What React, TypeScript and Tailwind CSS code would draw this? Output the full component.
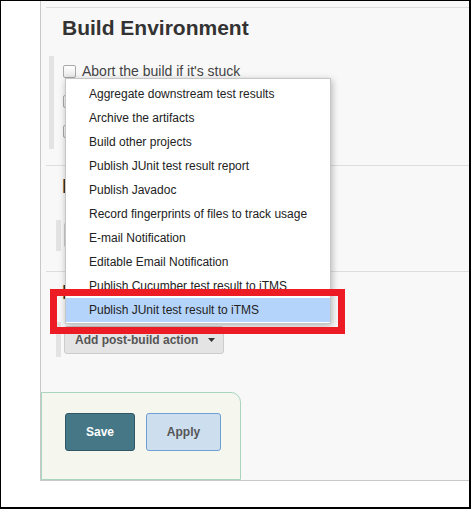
const menuItems = [
  'Aggregate downstream test results',
  'Archive the artifacts',
  'Build other projects',
  'Publish JUnit test result report',
  'Publish Javadoc',
  'Record fingerprints of files to track usage',
  'E-mail Notification',
  'Editable Email Notification',
  'Publish Cucumber test result to iTMS',
  'Publish JUnit test result to iTMS',
]

const envOptions = [
  "Abort the build if it's stuck",
  'Delete workspace before build starts',
  'Add timestamps to the Console Output',
]

function Checkbox() {
  return (
    <div className="w-[13px] h-[13px] shrink-0 rounded-[2px] border border-[#a9a9a9] bg-gradient-to-b from-white to-[#e9e9e9]" />
  )
}

function Caret() {
  return (
    <svg width="7" height="4" viewBox="0 0 7 4" className="ml-[10px]">
      <path d="M0 0 L7 0 L3.5 4 Z" fill="#333" />
    </svg>
  )
}

export default function App() {
  return (
    <div
      className="relative w-[471px] h-[509px] overflow-hidden bg-white border-black border-l border-t border-r-2 border-b-2 text-[#333]"
      style={{ fontFamily: '"Liberation Sans", Arial, sans-serif' }}
    >
      <div className="flex">
        {/* left gutter */}
        <div className="w-[39px] shrink-0" />

        {/* config panel */}
        <div className="flex-1 bg-[#f8f8f8] border-l border-b border-[#c8c8c8]">
          {/* Build Environment */}
          <div className="mt-[6px] ml-[5px] border-t border-[#dddddd] pb-[16px]">
            <h2 className="mt-[8px] pl-[16px] h-[24px] leading-[24px] text-[21px] font-bold text-[#333]">
              Build Environment
            </h2>
            <div className="mt-[16px] ml-[3px] h-[93px] border-l-[5px] border-[#e3e3e3] pl-[9px] flex flex-col">
              {envOptions.map((opt) => (
                <div key={opt} className="h-[30px] flex items-center gap-[6px]">
                  <Checkbox />
                  <span className="text-[14px] text-[#444]">{opt}</span>
                </div>
              ))}
            </div>
          </div>

          {/* Build */}
          <div className="ml-[5px] border-t border-[#dddddd] pb-[20px]">
            <h2 className="mt-[8px] pl-[16px] h-[24px] leading-[24px] text-[21px] font-bold text-[#333]">
              Build
            </h2>
            <div className="mt-[22px] ml-[10px] border-l-[5px] border-[#e3e3e3] pl-[3px] pt-[2px] pb-[3px]">
              <button className="h-[26px] px-[10px] flex items-center rounded-[3px] border border-[#cccccc] bg-[#e4e4e4] text-[12px] font-bold text-[#555]">
                Add build step
                <Caret />
              </button>
            </div>
          </div>

          {/* Post-build Actions */}
          <div className="ml-[5px] border-t border-[#dddddd]">
            <h2 className="mt-[8px] pl-[16px] h-[24px] leading-[24px] text-[21px] font-bold text-[#333]">
              Post-build Actions
            </h2>
            <div className="mt-[18px] ml-[10px] border-l-[5px] border-[#e3e3e3] pl-[3px] pt-[4px] pb-[3px]">
              <button className="w-[160px] h-[28px] pl-[10px] flex items-center rounded-[3px] border border-[#cccccc] bg-[#e4e4e4] text-[12px] font-bold text-[#555]">
                Add post-build action
                <Caret />
              </button>
            </div>
          </div>

          {/* save / apply bar */}
          <div className="mt-[35px] w-[200px] h-[88px] border border-[#a9d4c0] rounded-tr-[10px] bg-[#f5f7ef] pl-[23px] pt-[20px] flex gap-[11px] items-start">
            <button className="w-[70px] h-[38px] rounded-[3px] border border-[#2f5866] bg-[#467786] text-white text-[12px] font-bold">
              Save
            </button>
            <button className="w-[75px] h-[38px] rounded-[3px] border border-[#6e9fd5] bg-[#cddfef] text-[#555] text-[12px] font-bold">
              Apply
            </button>
          </div>
        </div>
      </div>

      {/* dropdown menu */}
      <div className="absolute left-[64px] top-[77px] w-[266px] pt-[3px] pb-[1px] bg-white border border-[#c6c6c6] shadow-[1px_2px_7px_rgba(0,0,0,0.28)]">
        {menuItems.map((item, idx) => (
          <div
            key={item}
            className={
              idx === menuItems.length - 1
                ? 'h-[24px] leading-[24px] pl-[23px] text-[12px] text-[#222] bg-[#b5d4fb]'
                : 'h-[24px] leading-[24px] pl-[23px] text-[12px] text-[#222]'
            }
          >
            {item}
          </div>
        ))}
      </div>

      {/* red annotation box */}
      <div className="absolute left-[49px] top-[288px] w-[295px] h-[45px] border-[7px] border-[#ed1c24]" />
    </div>
  )
}
